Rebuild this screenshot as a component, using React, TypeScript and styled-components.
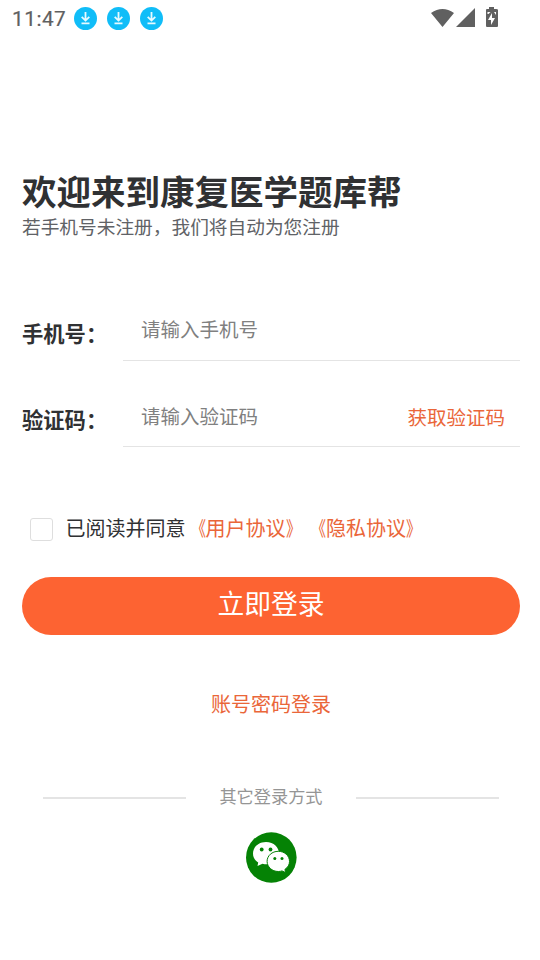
import React from "react";
import styled, { createGlobalStyle } from "styled-components";

const Global = createGlobalStyle`
  * { box-sizing: border-box; }
  body { margin: 0; background: #fff; font-family: "Noto Sans CJK SC", sans-serif; color: #303133; }
  button, input { font-family: inherit; padding: 0; border: 0; background: none; outline: 0; }
`;
const Screen = styled.main`
  width: 540px; height: 960px; display: flex; flex-direction: column; overflow: hidden;
`;
const StatusBar = styled.header`
  height: 37px; flex: none; display: flex; align-items: center; padding: 0 40px 0 12px;
`;
const Clock = styled.span`
  font: 400 20.8px/24px Roboto, sans-serif; color: #606060; width: 62px; letter-spacing: 0.5px; white-space: nowrap;
  -webkit-text-stroke: 0.2px #606060;
`;
const Downloads = styled.div`display: flex; gap: 10px; flex: 1; svg { display: block; }`;
const SystemIcons = styled.div`display: flex; align-items: center; height: 24px; padding-bottom: 2px;`;
const Intro = styled.section`
  margin: 129px 22px 0; height: 144px; display: flex; flex-direction: column; flex: none;
`;
const Title = styled.h1`margin: 0; font-size: 34.5px; line-height: 48px; font-weight: 700; white-space: nowrap;`;
const Subtitle = styled.p`margin: 0; font-size: 18.7px; line-height: 24px; color: #606266; white-space: nowrap;`;
const Field = styled.label<{ $h: number }>`
  height: ${p => p.$h}px; margin: 0 20px 0 22px; display: flex; align-items: flex-end; flex: none;
`;
const Label = styled.span`width: 101px; height: 43px; font-size: 21.3px; line-height: 29px; font-weight: 700; white-space: nowrap;`;
const InputLine = styled.span`
  flex: 1; height: 51px; border-bottom: 1px solid #e4e4e4; padding: 0 15px 0 18px; display: flex; align-items: flex-start;
`;
const Input = styled.input<{ $h: number }>`
  min-width: 0; flex: 1; height: ${p => p.$h}px; font-size: 19.5px; color: #303133;
  &::placeholder { color: #808080; opacity: 1; }
`;
const TextButton = styled.button<{ $size: number; $line: number }>`
  font-size: ${p => p.$size}px; line-height: ${p => p.$line}px; color: #ea6639; white-space: nowrap;
`;
const Agreement = styled.label`
  height: 30px; margin: 66px 0 0 30px; display: flex; align-items: center; font-size: 20px; line-height: 30px; white-space: nowrap; flex: none;
  text-spacing-trim: space-all; font-kerning: none;
`;
const Check = styled.input`
  appearance: none; width: 23px; height: 23px; margin: 3px 12.5px 0 0; border: 1px solid #dedede; border-radius: 3px;
`;
const Policy = styled.span`color: #ea6639; display: flex; margin-right: 0.5px;`;
const Bracket = styled.span<{ $side: "left" | "right" }>`
  width: 20px; transform: scaleX(0.75); transform-origin: ${p => (p.$side === "left" ? "right" : "left")};
`;
const Login = styled.button`
  flex: none; margin: 34px 20px 0 22px; height: 58px; border-radius: 29px; background: #fd6332; color: #fff; font-size: 26.8px; line-height: 52px; padding-bottom: 6px;
`;
const Alternate = styled.div`height: 40px; margin-top: 49px; display: flex; justify-content: center; padding-left: 2px; flex: none;`;
const Divider = styled.div`
  height: 26px; margin: 60px 41px 0 43px; display: flex; align-items: center; justify-content: space-between; color: #959595; font-size: 17.2px; flex: none;
`;
const DividerText = styled.span`line-height: 22px; padding-bottom: 3px;`;
const Rule = styled.span`width: 143px; height: 2px; background: #e4e4e4; margin-top: 2px;`;
const WechatButton = styled.button`width: 51px; height: 51px; margin: 22px 244px 0 246px; flex: none; svg { display: block; }`;

const DownloadIcon = () => (
  <svg width="23" height="24" viewBox="0 0 23 24"><circle cx="11.5" cy="11.5" r="11.5" fill="#10bdf8" />
    <path d="M11.5 5v8.5M7.7 9.8l3.8 3.8 3.8-3.8M7.5 16.3h8" fill="none" stroke="#e8faff" strokeWidth="1.8" />
  </svg>
);

const PolicyLink = ({ name }: { name: string }) => (
  <Policy><Bracket $side="left">《</Bracket>{name}<Bracket $side="right">》</Bracket></Policy>
);

export default function App() {
  return <><Global /><Screen>
    <StatusBar><Clock>11:47</Clock><Downloads><DownloadIcon /><DownloadIcon /><DownloadIcon /></Downloads>
      <SystemIcons><svg width="69" height="24" viewBox="0 0 69 24" fill="#606060">
        <path d="M0 7Q11.5-1 23 7L11.5 21ZM44 2v19H25ZM56 3h2V1h5v2h2q2 0 2 1v16q0 1-1 1H56q-1 0-1-1V4q0-1 1-1Z" />
        <path d="m61 7-4 7h3v5l4-7h-3ZM56.5 6h3l-2 2h-1ZM63 6h2v3Z" fill="#fff" />
      </svg></SystemIcons>
    </StatusBar>
    <Intro><Title>欢迎来到康复医学题库帮</Title><Subtitle>若手机号未注册，我们将自动为您注册</Subtitle></Intro>
    <Field $h={51}><Label>手机号：</Label><InputLine><Input $h={37} placeholder="请输入手机号" /></InputLine></Field>
    <Field $h={86}><Label>验证码：</Label><InputLine><Input $h={39} placeholder="请输入验证码" /><TextButton $size={19.5} $line={42}>获取验证码</TextButton></InputLine></Field>
    <Agreement><Check type="checkbox" />已阅读并同意<PolicyLink name="用户协议" /><PolicyLink name="隐私协议" /></Agreement>
    <Login>立即登录</Login>
    <Alternate><TextButton $size={20} $line={40}>账号密码登录</TextButton></Alternate>
    <Divider><Rule /><DividerText>其它登录方式</DividerText><Rule /></Divider>
    <WechatButton aria-label="微信登录"><svg width="51" height="51" viewBox="0 0 51 51">
      <circle cx="25.3" cy="25.5" r="25.3" fill="#058205" />
      <path d="M20 10C12.5 10 7 15 7 21.5c0 4 2 7 5.2 9L11.5 34l5-2.3q2 .6 4.5.6C28 32 33 27.5 33 21.5S28 10 20 10Z" fill="#fff" />
      <path d="M32.3 19.3c-6.2 0-11.2 4.4-11.2 10S26 39.5 32.3 39.5q2 0 3.7-.6l3.7 1.7-.8-3.2c3-2 4.6-4.7 4.6-8 0-5.7-5-10.1-11.2-10.1Z" fill="#fff" stroke="#058205" />
      <g fill="#058205"><circle cx="15.7" cy="17.5" r="1.9" /><circle cx="24.5" cy="17.5" r="1.9" /><circle cx="28.8" cy="26.5" r="1.5" /><circle cx="36" cy="26.5" r="1.5" /></g>
    </svg></WechatButton>
  </Screen></>;
}
